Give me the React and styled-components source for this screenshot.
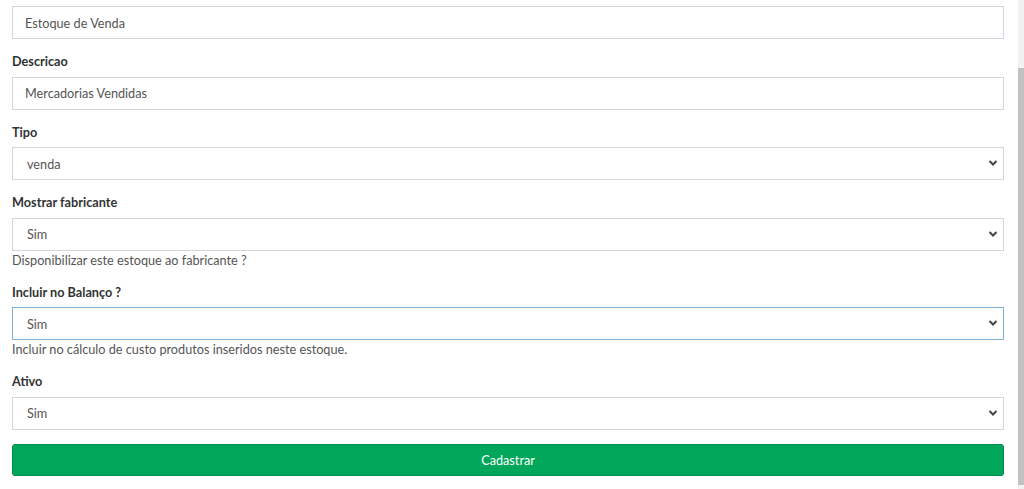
import React from "react";
import styled, { createGlobalStyle, css } from "styled-components";

const Global = createGlobalStyle`
  html, body { margin: 0; padding: 0; background: #fff; }
  body { font-family: Lato, "Liberation Sans", sans-serif; font-size: 12.7px; color: #333; overflow: hidden; }
  * { box-sizing: border-box; }
`;

const Page = styled.div`
  display: flex;
  width: 1024px;
  height: 489px;
  overflow: hidden;
`;

const Form = styled.form`
  flex: 1;
  display: flex;
  flex-direction: column;
  padding: 6px 14px 0 12px;
`;

const Group = styled.div`
  display: flex;
  flex-direction: column;
  margin-bottom: 14px;
`;

const Label = styled.label`
  font-weight: 700;
  font-size: 12.7px;
  line-height: 17.5px;
  color: #333;
  margin-bottom: 6px;
`;

const fieldBase = css`
  height: 33px;
  width: 100%;
  border: 1px solid ${(p) => (p.$focus ? "#7fb0d6" : "#d2d6de")};
  background: #fff;
  font-family: inherit;
  font-size: 12.7px;
  color: #555;
  outline: none;
`;

const Input = styled.input`
  ${fieldBase};
  padding: 0 12px;
`;

const SelectWrap = styled.div`
  position: relative;
`;

const Select = styled.select`
  ${fieldBase};
  appearance: none;
  padding: 0 12px 0 14px;
`;

const Chevron = styled.svg`
  position: absolute;
  right: 6px;
  top: 12px;
  width: 10px;
  height: 8px;
  pointer-events: none;
`;

const Help = styled.div`
  font-size: 12.7px;
  line-height: 19px;
  color: #555;
`;

const Button = styled.button`
  height: 32px;
  width: 100%;
  border: 1px solid #008d4c;
  border-radius: 3px;
  background: #00a65a;
  color: #fff;
  font-family: inherit;
  font-size: 12.7px;
`;

const ScrollTrack = styled.div`
  width: 6px;
  background: #f1f1f1;
  display: flex;
  flex-direction: column;
  padding-top: 68px;
  padding-bottom: 4px;
`;

const ScrollThumb = styled.div`
  flex: 1;
  background: #c1c1c1;
`;

function SelectField({ value, focus }) {
  return (
    <SelectWrap>
      <Select $focus={focus} defaultValue={value}>
        <option>{value}</option>
      </Select>
      <Chevron viewBox="0 0 10 8">
        <path d="M1.5 2 L5 5.5 L8.5 2" fill="none" stroke="#444" strokeWidth="2" />
      </Chevron>
    </SelectWrap>
  );
}

export default function App() {
  return (
    <Page>
      <Global />
      <Form onSubmit={(e) => e.preventDefault()}>
        <Group>
          <Input defaultValue="Estoque de Venda" />
        </Group>
        <Group>
          <Label>Descricao</Label>
          <Input defaultValue="Mercadorias Vendidas" />
        </Group>
        <Group>
          <Label>Tipo</Label>
          <SelectField value="venda" />
        </Group>
        <Group>
          <Label>Mostrar fabricante</Label>
          <SelectField value="Sim" />
          <Help>Disponibilizar este estoque ao fabricante ?</Help>
        </Group>
        <Group>
          <Label>Incluir no Balanço ?</Label>
          <SelectField value="Sim" focus />
          <Help>Incluir no cálculo de custo produtos inseridos neste estoque.</Help>
        </Group>
        <Group>
          <Label>Ativo</Label>
          <SelectField value="Sim" />
        </Group>
        <Button type="submit">Cadastrar</Button>
      </Form>
      <ScrollTrack>
        <ScrollThumb />
      </ScrollTrack>
    </Page>
  );
}
